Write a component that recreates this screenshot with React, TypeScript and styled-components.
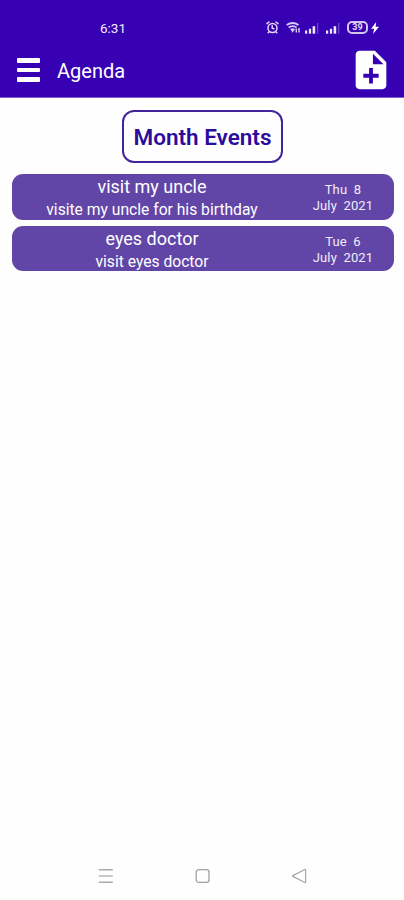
import styled, { createGlobalStyle } from 'styled-components';

interface AgendaEvent {
  id: number;
  title: string;
  description: string;
  day: string;
  month: string;
}

const events: AgendaEvent[] = [
  { id: 1, title: 'visit my uncle', description: 'visite my uncle for his birthday', day: 'Thu  8', month: 'July  2021' },
  { id: 2, title: 'eyes doctor', description: 'visit eyes doctor', day: 'Tue  6', month: 'July  2021' },
];

const AlarmIcon = () => (
  <svg width="13" height="13" viewBox="0 0 13 13" fill="none" stroke="#e4dcf8" strokeWidth="1.5" strokeLinecap="round">
    <circle cx="6.5" cy="7" r="4.5" />
    <path d="M6.2 4.8v2.5l1.7.5M1 2.6 3 1M12 2.6 10 1M3.2 10.7l-1 1M9.8 10.7l1 1" />
  </svg>
);

const WifiIcon = () => (
  <svg width="15" height="13" viewBox="0 0 15 13" fill="none" stroke="#d5c9f3" strokeWidth="1.8">
    <path d="M.7 4C4.2 1.6 9 1.6 12.5 4M2.6 6.4c2.4-1.6 5.6-1.6 8 0" />
    <path d="M4.2 8 6.6 11.8 9 8C7.5 7 5.7 7 4.2 8Z" fill="#d5c9f3" stroke="none" />
    <path d="M10.3 11.5V7.6M13 7v4.5" strokeWidth="1.5" />
  </svg>
);

const SignalIcon = () => (
  <svg width="14" height="12" viewBox="0 0 14 12" fill="#eee8fb">
    <rect x="0" y="8.5" width="2.2" height="3.2" />
    <rect x="3.9" y="6.8" width="2.2" height="4.9" />
    <rect x="7.6" y="4.2" width="2.6" height="7.5" />
    <rect x="12" y="1" width="1.3" height="10.7" opacity="0.3" />
  </svg>
);

const BoltIcon = () => (
  <svg width="8" height="12" viewBox="0 0 8 12" fill="#fff">
    <path d="M5.2 0 .1 6.7h3L2.1 12 8 4.8H4.6L5.2 0Z" />
  </svg>
);

const NoteAddIcon = () => (
  <svg width="46" height="46" viewBox="0 0 24 24" fill="#fff">
    <path d="M14 2H6c-1.1 0-1.99.9-1.99 2L4 20c0 1.1.89 2 1.99 2H18c1.1 0 2-.9 2-2V8l-6-6zm2 14h-3v3h-2v-3H8v-2h3v-3h2v3h3v2zm-3-7V3.5L18.5 9H13z" />
  </svg>
);

const App = () => (
  <>
    <GlobalStyle />
    <Screen>
      <Header>
        <StatusBar>
          <Clock>6:31</Clock>
          <StatusIcons>
            <AlarmIcon />
            <WifiIcon />
            <SignalIcon />
            <SignalIcon />
            <Battery>39</Battery>
            <BoltIcon />
          </StatusIcons>
        </StatusBar>
        <Toolbar>
          <MenuButton type="button" aria-label="Menu">
            <MenuLine />
            <MenuLine />
            <MenuLine />
          </MenuButton>
          <Title>Agenda</Title>
          <AddButton type="button" aria-label="Add event">
            <NoteAddIcon />
          </AddButton>
        </Toolbar>
      </Header>
      <Content>
        <MonthButton type="button">Month Events</MonthButton>
        <EventList>
          {events.map((event) => (
            <EventCard key={event.id}>
              <EventText>
                <EventTitle>{event.title}</EventTitle>
                <EventDescription>{event.description}</EventDescription>
              </EventText>
              <EventDate>
                <span>{event.day}</span>
                <span>{event.month}</span>
              </EventDate>
            </EventCard>
          ))}
        </EventList>
      </Content>
      <NavBar>
        <svg width="16" height="16" viewBox="0 0 16 16" stroke="#a9a9a9" strokeWidth="1.5">
          <path d="M.8 1.8h14M.8 14.2h14" />
          <path d="M.8 8h14" stroke="#c8c8c8" strokeWidth="2" />
        </svg>
        <svg width="16" height="16" viewBox="0 0 16 16" fill="none" stroke="#a0a0a0" strokeWidth="1.3">
          <rect x="1.2" y="1.6" width="12.8" height="12.8" rx="2.6" />
        </svg>
        <svg width="16" height="16" viewBox="0 0 16 16" fill="none" stroke="#a6a6a6" strokeWidth="1.2" strokeLinejoin="round">
          <path d="M14.6 2v12.2q0 .6-.7.3L1.8 8.4q-.6-.4 0-.8L13.9 1.5q.7-.2.7.5Z" />
        </svg>
      </NavBar>
    </Screen>
  </>
);

const GlobalStyle = createGlobalStyle`
  * {
    box-sizing: border-box;
  }

  body {
    margin: 0;
    background: #fefefe;
    font-family: Roboto, 'Liberation Sans', sans-serif;
  }

  button {
    padding: 0;
    border: none;
    background: none;
    font: inherit;
  }

  svg {
    display: block;
    flex: none;
  }
`;

const Screen = styled.div`
  display: flex;
  flex-direction: column;
  width: 404px;
  height: 900px;
  overflow: hidden;
`;

const Header = styled.header`
  height: 98px;
  background: #3700b3;
  color: #fff;
  border-bottom: 1px solid #7f62cb;
`;

const StatusBar = styled.div`
  display: flex;
  align-items: center;
  justify-content: space-between;
  height: 44px;
  padding: 11px 25px 0 100px;
`;

const Clock = styled.span`
  font-size: 13.5px;
  font-weight: 400;
  color: #f1ecfc;
`;

const StatusIcons = styled.div`
  display: flex;
  align-items: center;

  & > :nth-child(2) {
    margin-left: 7px;
  }

  & > :nth-child(3) {
    margin-left: 4px;
  }

  & > :nth-child(4),
  & > :nth-child(5) {
    margin-left: 7px;
  }

  & > :nth-child(6) {
    margin-left: 3px;
  }
`;

const Battery = styled.span`
  display: flex;
  align-items: center;
  justify-content: center;
  width: 21px;
  height: 13px;
  border: 2px solid #d3c7f2;
  border-radius: 5px;
  font-size: 9px;
  font-weight: 700;
  line-height: 1;
  color: #e4dcf8;
`;

const Toolbar = styled.div`
  display: flex;
  align-items: center;
  height: 53px;
  padding: 0 10px 0 17px;
`;

const MenuButton = styled.button`
  display: flex;
  flex-direction: column;
  gap: 5px;
  margin-top: -1px;
`;

const MenuLine = styled.span`
  width: 23px;
  height: 4.5px;
  border-radius: 1px;
  background: #fff;
`;

const Title = styled.h1`
  flex: 1;
  margin: 1px 0 0 17px;
  font-size: 20px;
  font-weight: 400;
  line-height: 26px;
`;

const AddButton = styled.button`
  margin: 0 0 1px;
`;

const Content = styled.main`
  flex: 1;
  display: flex;
  flex-direction: column;
  align-items: center;
  padding: 12px 10.5px 0 11.5px;
`;

const MonthButton = styled.button`
  width: 161px;
  height: 52.5px;
  padding-top: 1px;
  border: 2px solid #42249c;
  border-radius: 12px;
  font-size: 22.5px;
  font-weight: 600;
  color: #2c0c9c;
  white-space: nowrap;
`;

const EventList = styled.ul`
  display: flex;
  flex-direction: column;
  gap: 6px;
  width: 100%;
  margin: 11.5px 0 0;
  padding: 0;
  list-style: none;
`;

const EventCard = styled.li`
  display: flex;
  height: 45.5px;
  border-radius: 11px;
  background: #6246a7;
  color: #fff;
`;

const EventText = styled.div`
  display: flex;
  flex-direction: column;
  align-items: center;
  width: 281px;
`;

const EventTitle = styled.span`
  padding-top: 1px;
  font-size: 18px;
  line-height: 24px;
`;

const EventDescription = styled.span`
  font-size: 15.65px;
  line-height: 22px;
`;

const EventDate = styled.div`
  display: flex;
  flex-direction: column;
  align-items: center;
  width: 101px;
  padding-top: 8px;
  font-size: 13px;
  line-height: 16px;
  letter-spacing: 0.1px;
  white-space: pre;
  color: #f1edfa;
`;

const NavBar = styled.nav`
  display: flex;
  align-items: center;
  justify-content: space-between;
  height: 49px;
  padding: 0 97px 0 98px;
`;

export default App;
